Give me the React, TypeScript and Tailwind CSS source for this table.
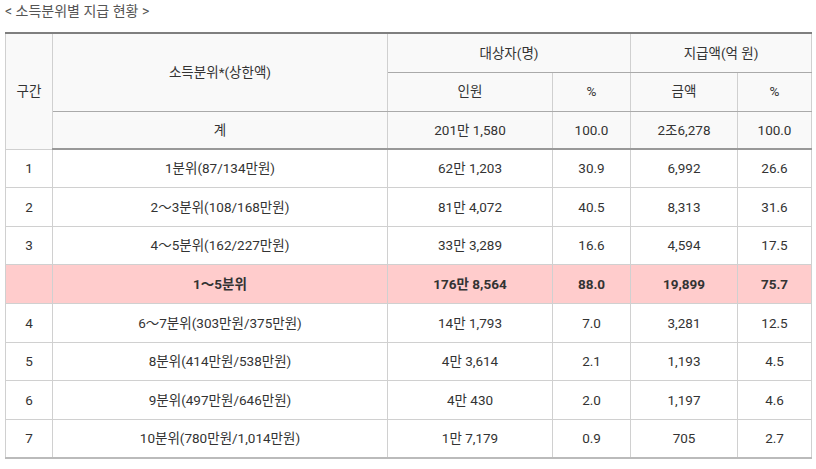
const rows = [
  ["1", "1분위(87/134만원)", "62만 1,203", "30.9", "6,992", "26.6"],
  ["2", "2～3분위(108/168만원)", "81만 4,072", "40.5", "8,313", "31.6"],
  ["3", "4～5분위(162/227만원)", "33만 3,289", "16.6", "4,594", "17.5"],
  ["", "1～5분위", "176만 8,564", "88.0", "19,899", "75.7"],
  ["4", "6～7분위(303만원/375만원)", "14만 1,793", "7.0", "3,281", "12.5"],
  ["5", "8분위(414만원/538만원)", "4만 3,614", "2.1", "1,193", "4.5"],
  ["6", "9분위(497만원/646만원)", "4만 430", "2.0", "1,197", "4.6"],
  ["7", "10분위(780만원/1,014만원)", "1만 7,179", "0.9", "705", "2.7"],
];

export default function App() {
  return (
    <div className="bg-white w-[816px] h-[469px] px-[5px] pt-[2px] text-[#333] font-['Roboto','Noto_Sans_CJK_KR',sans-serif]">
      <p className="text-[14px] leading-[19px] text-[#555]">&lt; 소득분위별 지급 현황 &gt;</p>
      <table className="mt-[11px] w-[806px] table-fixed border-collapse text-[13.5px] text-center border-t-2 border-t-[#7f7f7f] border-b-2 border-b-[#bbb] border-x border-x-[#ccc]">
        <colgroup>
          <col className="w-[47px]" />
          <col className="w-[335px]" />
          <col className="w-[165px]" />
          <col className="w-[78px]" />
          <col className="w-[107px]" />
          <col className="w-[74px]" />
        </colgroup>
        <thead className="bg-[#f9f9f9]">
          <tr className="h-[39px]">
            <th rowSpan={3} className="font-normal border border-[#d0d0d0]">구간</th>
            <th rowSpan={2} className="font-normal border border-[#d0d0d0] border-b-[#aaa]">소득분위*(상한액)</th>
            <th colSpan={2} className="font-normal border border-[#d0d0d0] border-b-[#aaa]">대상자(명)</th>
            <th colSpan={2} className="font-normal border border-[#d0d0d0] border-b-[#aaa]">지급액(억 원)</th>
          </tr>
          <tr className="h-[39px]">
            <th className="font-normal border border-[#d0d0d0] border-b-[#aaa]">인원</th>
            <th className="font-normal border border-[#d0d0d0] border-b-[#aaa]">%</th>
            <th className="font-normal border border-[#d0d0d0] border-b-[#aaa]">금액</th>
            <th className="font-normal border border-[#d0d0d0] border-b-[#aaa]">%</th>
          </tr>
          <tr className="h-[38px]">
            <th className="font-normal border border-[#d0d0d0] border-b-2 border-b-[#999]">계</th>
            <th className="font-normal border border-[#d0d0d0] border-b-2 border-b-[#999]">201만 1,580</th>
            <th className="font-normal border border-[#d0d0d0] border-b-2 border-b-[#999]">100.0</th>
            <th className="font-normal border border-[#d0d0d0] border-b-2 border-b-[#999]">2조6,278</th>
            <th className="font-normal border border-[#d0d0d0] border-b-2 border-b-[#999]">100.0</th>
          </tr>
        </thead>
        <tbody>
          {rows.map((r, i) => {
            const hi = r[0] === "";
            return (
              <tr key={i} className={hi ? "h-[39px] bg-[#ffcccc] font-bold" : "h-[38.5px]"}>
                {r.map((c, j) => (
                  <td key={j} className="border border-[#d0d0d0]">
                    {c}
                  </td>
                ))}
              </tr>
            );
          })}
        </tbody>
      </table>
    </div>
  );
}
